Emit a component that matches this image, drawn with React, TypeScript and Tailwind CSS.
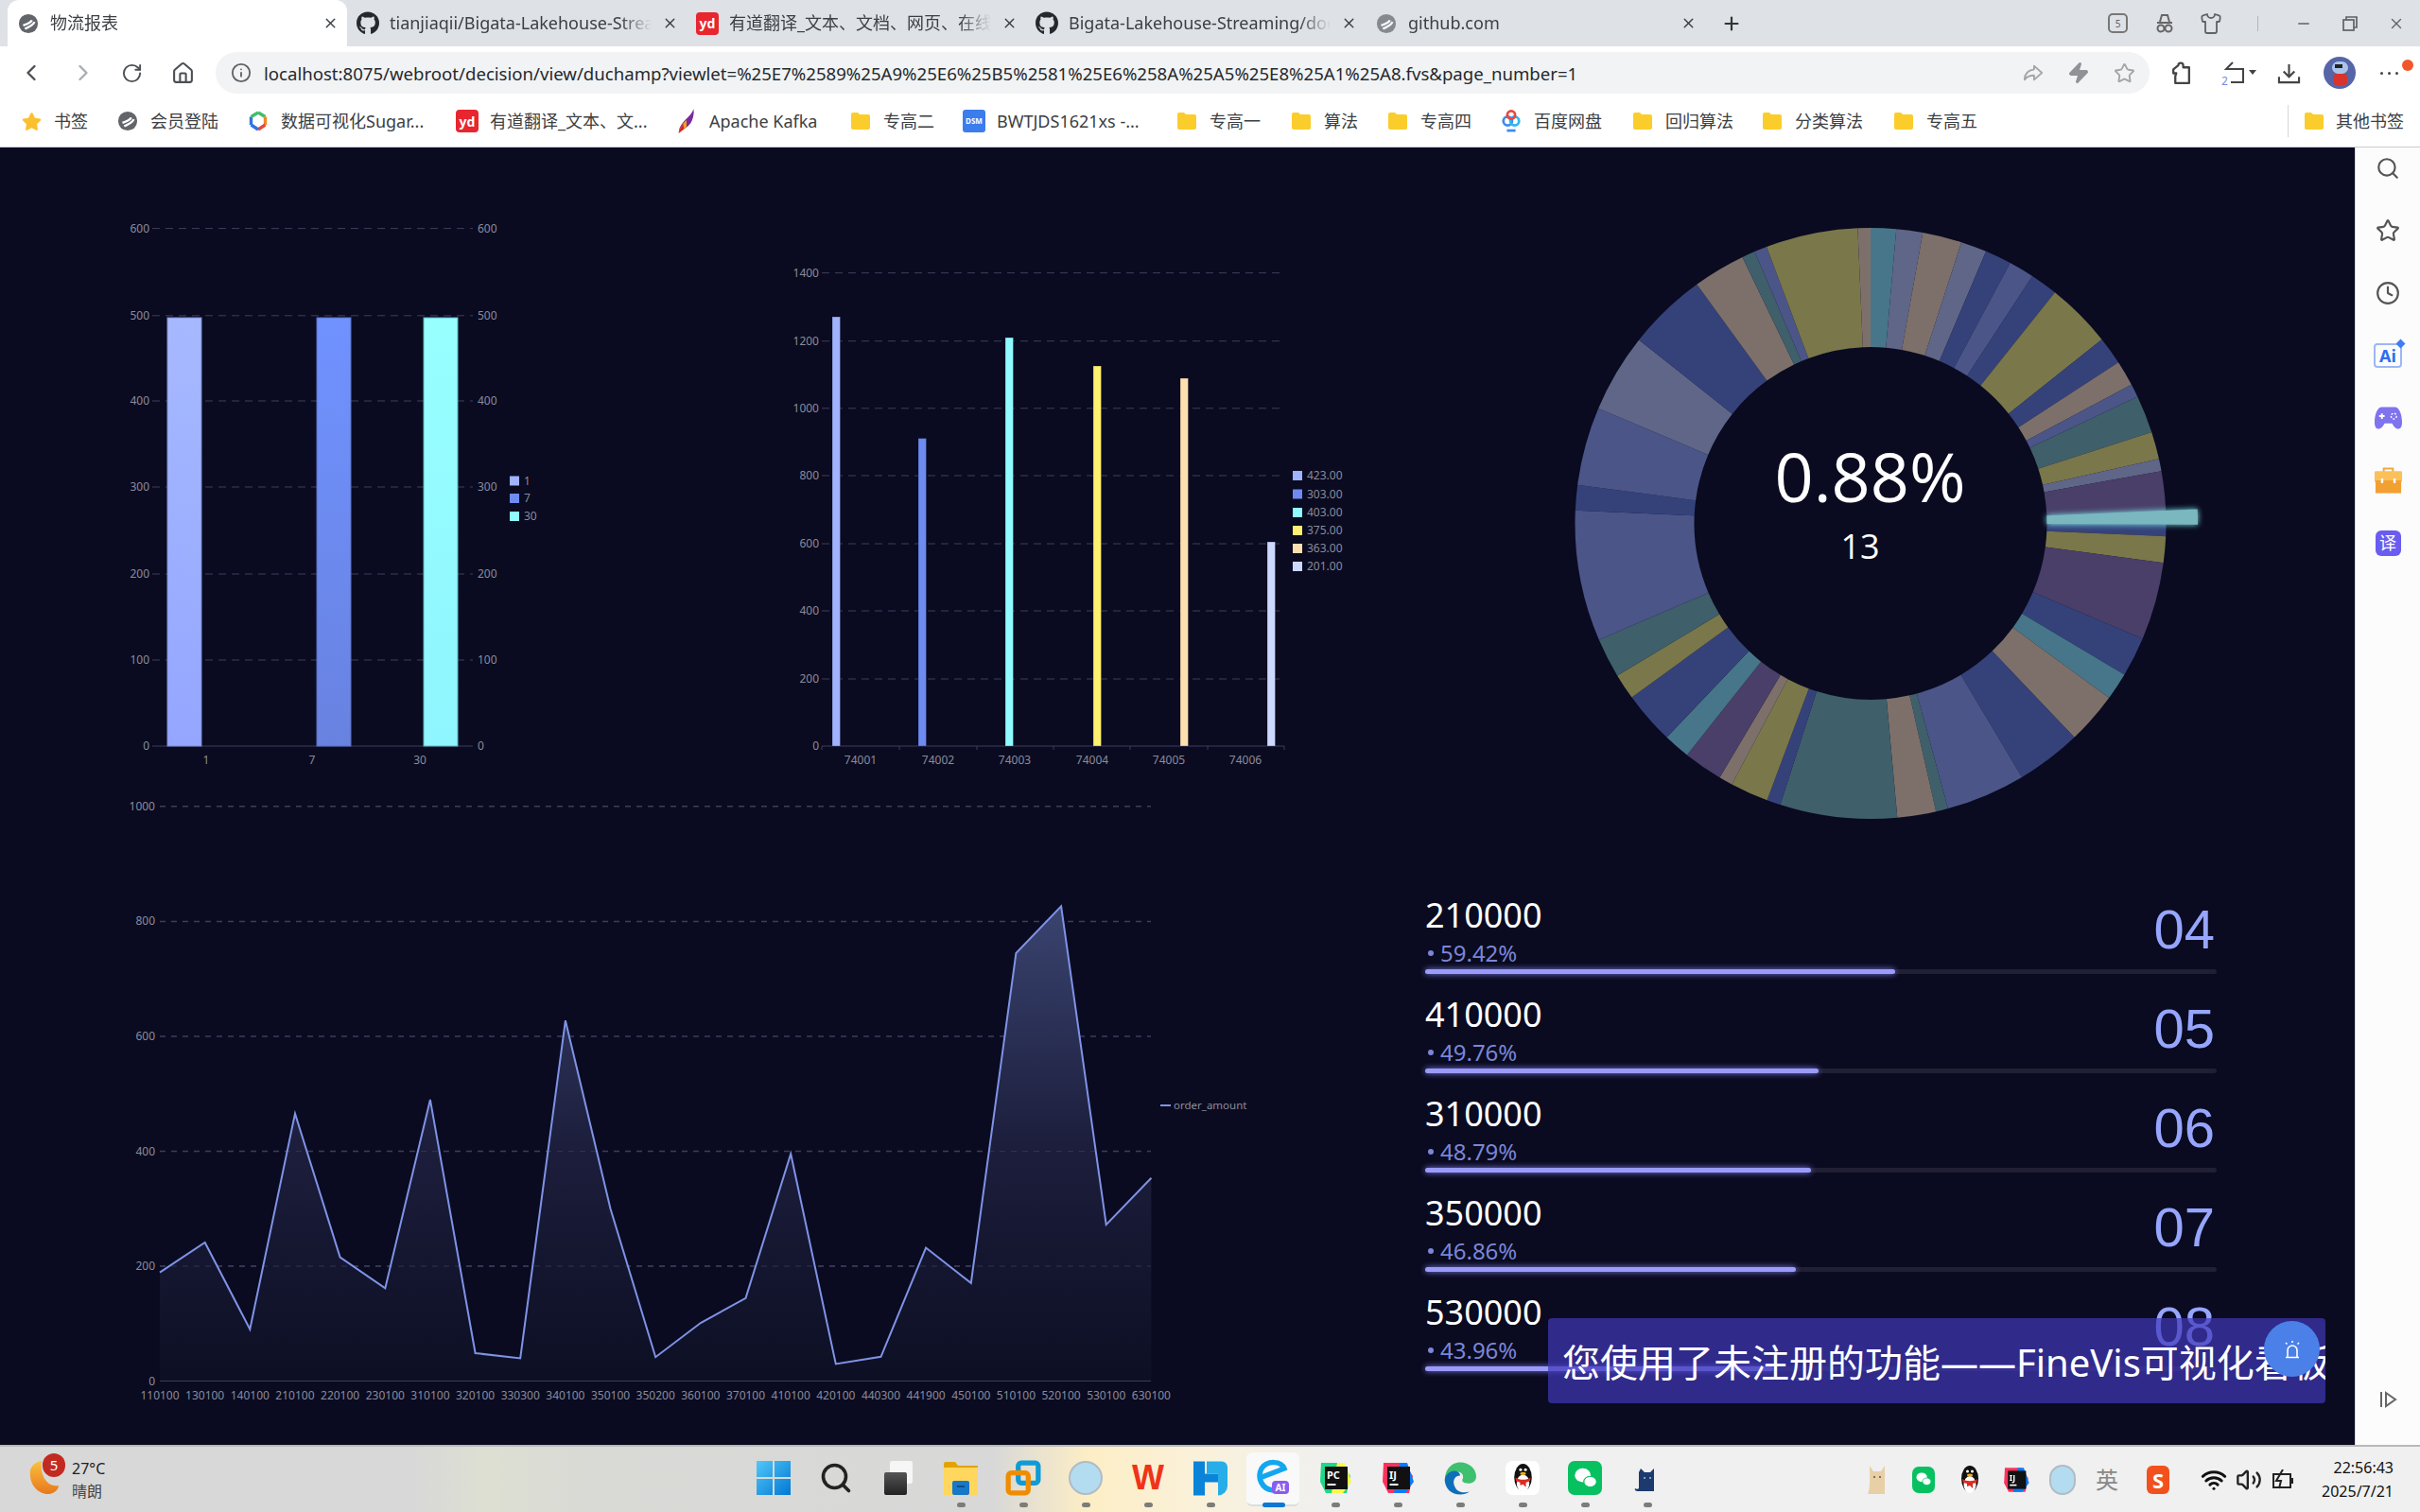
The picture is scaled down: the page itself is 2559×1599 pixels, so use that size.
import { FaGithub, FaStar } from "react-icons/fa";
import {
  ChevronLeft,
  ChevronRight,
  Clock,
  Home,
  Info,
  Minus,
  Plus,
  RotateCw,
  Search,
  Shirt,
  Star,
  Volume2,
  Wifi,
  X,
  Zap,
} from "lucide-react";
import type { ReactNode } from "react";

const cjk = "[font-family:'Noto_Sans','Noto_Sans_CJK_SC',sans-serif]";

/* ---------- small logos ---------- */

function FineLogo({ className = "" }: { className?: string }) {
  return (
    <svg viewBox="0 0 24 24" className={`h-[22px] w-[22px] ${className}`}>
      <circle cx="12" cy="12" r="11" fill="#62666b" />
      <path d="M6 14c3-1 9-3 10-6M8 18c3-2 9-3 11-8" stroke="#fff" strokeWidth="2.6" fill="none" />
    </svg>
  );
}

function YdLogo() {
  return (
    <div className="flex h-[24px] w-[24px] items-center justify-center rounded-[4px] bg-[#e8262f] text-[14px] font-bold text-white">
      yd
    </div>
  );
}

function FolderIcon() {
  return (
    <svg viewBox="0 0 20 18" className="h-[18px] w-[20px]">
      <path d="M0 2a2 2 0 0 1 2-2h5l2 2h9a2 2 0 0 1 2 2v12a2 2 0 0 1-2 2H2a2 2 0 0 1-2-2z" fill="#fbcd2c" />
    </svg>
  );
}

function SugarLogo() {
  return (
    <svg viewBox="0 0 24 24" className="h-[24px] w-[24px]" fill="none" strokeWidth="3.4">
      <path d="M12 3l7.5 4.5" stroke="#3fbf6b" />
      <path d="M19.5 7.5V16" stroke="#f08a24" />
      <path d="M19.5 16L12 21" stroke="#e34a3a" />
      <path d="M12 21l-7.5-5" stroke="#2f73e0" />
      <path d="M4.5 16V7.5" stroke="#2f73e0" />
      <path d="M4.5 7.5L12 3" stroke="#3fbf6b" />
    </svg>
  );
}

function KafkaLogo() {
  return (
    <svg viewBox="0 0 24 28" className="h-[28px] w-[22px]">
      <path d="M20 0C18 8 8 12 4 22c-1 3-1 5-1 6 5-5 12-7 15-14 2-5 3-10 2-14z" fill="#7b2a9c" />
      <path d="M12 13C8 16 4 22 3 28c4-3 7-5 9-8z" fill="#f2a01e" />
      <path d="M8 17c-2 3-4 7-5 11 2-2 4-3 6-5z" fill="#d3232b" />
    </svg>
  );
}

function BaiduLogo() {
  return (
    <svg viewBox="0 0 24 28" className="h-[26px] w-[22px]" fill="none" strokeWidth="3">
      <circle cx="8" cy="14" r="5" stroke="#3f8bf0" />
      <circle cx="16" cy="14" r="5" stroke="#31b6f0" />
      <circle cx="12" cy="7" r="4.5" stroke="#e8483f" />
      <path d="M7 25h10" stroke="#3f8bf0" />
    </svg>
  );
}

/* ---------- browser chrome ---------- */

const tabs = [
  { title: "物流报表", icon: <FineLogo />, active: true },
  { title: "tianjiaqii/Bigata-Lakehouse-Streaming", icon: <FaGithub className="h-[25px] w-[25px] text-[#24292f]" /> },
  { title: "有道翻译_文本、文档、网页、在线翻译", icon: <YdLogo /> },
  { title: "Bigata-Lakehouse-Streaming/doc", icon: <FaGithub className="h-[25px] w-[25px] text-[#24292f]" /> },
  { title: "github.com", icon: <FineLogo className="opacity-70" /> },
];

function TabBar() {
  return (
    <div className="flex h-[49px] items-center bg-[#dee1e6] pl-[8px]">
      {tabs.map((tab) => (
        <div
          key={tab.title}
          className={`flex h-full w-[359px] shrink-0 items-center gap-[11px] pl-[10px] pr-[9px] ${
            tab.active ? "rounded-t-[12px] bg-white" : ""
          }`}
        >
          <div className="flex w-[24px] shrink-0 justify-center">{tab.icon}</div>
          <div className="min-w-0 flex-1 overflow-hidden whitespace-nowrap text-[18px] text-[#3c4043] [mask-image:linear-gradient(to_right,black_88%,transparent)]">
            {tab.title}
          </div>
          <X className="h-[17px] w-[17px] shrink-0 text-[#3c4043]" strokeWidth={2} />
        </div>
      ))}
      <Plus className="ml-[17px] h-[22px] w-[22px] text-[#333]" strokeWidth={2.4} />
      <div className="ml-auto flex items-center text-[#5f6368]">
        <div className="flex h-[21px] w-[21px] items-center justify-center rounded-[5px] border-2 border-[#777] text-[10px] leading-none">5</div>
        <svg viewBox="0 0 24 24" className="ml-[27px] h-[24px] w-[24px]" fill="none" stroke="#666" strokeWidth="2">
          <path d="M7 10l2-7h6l2 7M4 11h16" />
          <circle cx="8" cy="17" r="3.5" />
          <circle cx="16" cy="17" r="3.5" />
        </svg>
        <Shirt className="ml-[25px] h-[24px] w-[24px]" strokeWidth={1.8} />
        <div className="ml-[37px] h-[16px] w-px bg-[#b5b5b5]" />
        <Minus className="ml-[39px] h-[18px] w-[18px]" strokeWidth={1.8} />
        <svg viewBox="0 0 18 18" className="ml-[31px] h-[18px] w-[18px]" fill="none" stroke="#5f6368" strokeWidth="1.7">
          <rect x="2" y="5" width="11" height="11" />
          <path d="M5 5V2h11v11h-3" />
        </svg>
        <X className="ml-[31px] mr-[16px] h-[18px] w-[18px]" strokeWidth={1.8} />
      </div>
    </div>
  );
}

function Toolbar() {
  return (
    <div className="flex h-[56px] items-center bg-white text-[#4b4f54]">
      <div className="flex w-[228px] shrink-0 items-center">
        <ChevronLeft className="ml-[19px] h-[28px] w-[28px]" strokeWidth={2} />
        <ChevronRight className="ml-[27px] h-[28px] w-[28px] text-[#a9acb0]" strokeWidth={2} />
        <RotateCw className="ml-[26px] h-[23px] w-[23px]" strokeWidth={2} />
        <Home className="ml-[30px] h-[25px] w-[25px]" strokeWidth={2} />
      </div>
      <div className="flex h-[44px] w-[2045px] shrink-0 items-center rounded-full bg-[#f1f3f4] pl-[16px]">
        <Info className="h-[22px] w-[22px] text-[#5f6368]" strokeWidth={2} />
        <div className="ml-[13px] w-[1394px] whitespace-nowrap pt-[2px] text-[18.6px] text-[#26292d]">
          localhost:8075/webroot/decision/view/duchamp?viewlet=%25E7%2589%25A9%25E6%25B5%2581%25E6%258A%25A5%25E8%25A1%25A8.fvs&amp;page_number=1
        </div>
        <svg viewBox="0 0 24 24" className="ml-[466px] h-[22px] w-[22px]" fill="none" stroke="#a3a6a9" strokeWidth="2" strokeLinejoin="round">
          <path d="M13 4l9 8-9 8v-5c-5 0-8 1-11 5 0-7 4-11 11-12z" />
        </svg>
        <Zap className="ml-[25px] h-[24px] w-[24px] fill-[#8f9296] text-[#8f9296]" />
        <Star className="ml-[25px] h-[23px] w-[23px] text-[#a3a6a9]" strokeWidth={2} />
      </div>
      <svg viewBox="0 0 24 24" className="ml-[21px] h-[25px] w-[25px]" fill="none" stroke="#444" strokeWidth="2.2" strokeLinejoin="round">
        <path d="M6 22h14V6h-6V4a2.5 2.5 0 0 0-5 0L4 8v4h3l-1 3z" />
      </svg>
      <svg viewBox="0 0 40 28" className="ml-[28px] h-[28px] w-[40px]" fill="none">
        <path d="M14 3L7 10h18v14H12" stroke="#444" strokeWidth="2" />
        <text x="2" y="27" fill="#7d86e8" fontSize="12">2</text>
        <path d="M31 11h8l-4 5z" fill="#444" />
      </svg>
      <svg viewBox="0 0 26 26" className="ml-[21px] h-[25px] w-[25px]" fill="none" stroke="#444" strokeWidth="2.2">
        <path d="M13 3v14M7 11l6 6 6-6M2 17v6h22v-6" />
      </svg>
      <div className="relative ml-[24px] h-[34px] w-[34px] overflow-hidden rounded-full bg-[#5665a8]">
        <div className="absolute left-[10px] top-[18px] h-[12px] w-[15px] rounded-[4px] bg-[#d8342c]" />
        <div className="absolute left-[9px] top-[5px] h-[13px] w-[17px] rounded-full bg-[#a9c4e8]" />
        <div className="absolute left-[12px] top-[8px] h-[4px] w-[8px] bg-[#222]" />
      </div>
      <div className="ml-[26px] flex gap-[5px]">
        <div className="h-[3px] w-[3px] rounded-full bg-[#444]" />
        <div className="h-[3px] w-[3px] rounded-full bg-[#444]" />
        <div className="h-[3px] w-[3px] rounded-full bg-[#444]" />
      </div>
      <div className="absolute left-[2540px] top-[63px] h-[12px] w-[12px] rounded-full bg-[#f2552c]" />
    </div>
  );
}

const bookmarks: { label: string; icon: ReactNode; width: string }[] = [
  { label: "书签", icon: <FaStar className="h-[21px] w-[21px] text-[#fbc02d]" />, width: "w-[102px]" },
  { label: "会员登陆", icon: <FineLogo />, width: "w-[138px]" },
  { label: "数据可视化Sugar...", icon: <SugarLogo />, width: "w-[221px]" },
  { label: "有道翻译_文本、文...", icon: <YdLogo />, width: "w-[232px]" },
  { label: "Apache Kafka", icon: <KafkaLogo />, width: "w-[184px]" },
  { label: "专高二", icon: <FolderIcon />, width: "w-[120px]" },
  { label: "BWTJDS1621xs -...", icon: <div className="flex h-[24px] w-[24px] items-center justify-center rounded-[3px] bg-[#3b7ded] text-[8px] font-bold text-white">DSM</div>, width: "w-[225px]" },
  { label: "专高一", icon: <FolderIcon />, width: "w-[121px]" },
  { label: "算法", icon: <FolderIcon />, width: "w-[102px]" },
  { label: "专高四", icon: <FolderIcon />, width: "w-[120px]" },
  { label: "百度网盘", icon: <BaiduLogo />, width: "w-[139px]" },
  { label: "回归算法", icon: <FolderIcon />, width: "w-[137px]" },
  { label: "分类算法", icon: <FolderIcon />, width: "w-[139px]" },
  { label: "专高五", icon: <FolderIcon />, width: "w-[418px]" },
];

function BookmarkBar() {
  return (
    <div className="flex h-[51px] items-center border-b border-[#c9ccd0] bg-white pb-[4px] pl-[21px] text-[18px] text-[#3c4043]">
      {bookmarks.map((b) => (
        <div key={b.label} className={`flex shrink-0 items-center gap-[12px] ${b.width}`}>
          <div className="flex w-[24px] shrink-0 justify-center">{b.icon}</div>
          <span className="whitespace-nowrap">{b.label}</span>
        </div>
      ))}
      <div className="h-[34px] w-px bg-[#d5d7da]" />
      <div className="ml-[17px] flex items-center gap-[13px]">
        <FolderIcon />
        <span>其他书签</span>
      </div>
    </div>
  );
}

function SideRail() {
  return (
    <div className="flex w-[69px] shrink-0 flex-col items-center gap-[40px] border-l border-[#d8d9dd] bg-[#fcfcfc] pt-[9px]">
      <div className="flex h-[26px] items-center"><Search className="h-[26px] w-[26px] text-[#555]" strokeWidth={2} /></div>
      <div className="flex h-[26px] items-center"><Star className="h-[26px] w-[26px] text-[#555]" strokeWidth={2} /></div>
      <div className="flex h-[26px] items-center"><Clock className="h-[26px] w-[26px] text-[#555]" strokeWidth={2} /></div>
      <div className="flex h-[26px] items-center">
        <div className="relative flex h-[26px] w-[30px] items-center justify-center rounded-[4px] border-2 border-[#9db7f5] text-[18px] font-bold leading-none text-[#2f6df0]">
          Ai
          <div className="absolute -right-[4px] -top-[5px] h-[7px] w-[7px] rotate-45 bg-[#3f7bf5]" />
        </div>
      </div>
      <div className="flex h-[26px] items-center">
        <svg viewBox="0 0 32 26" className="h-[26px] w-[31px]">
          <path d="M9 1h14c5 0 8 8 8 17 0 9-6 8-9 4l-2-3h-8l-2 3c-3 4-9 5-9-4C1 9 4 1 9 1z" fill="#7f73ee" />
          <path d="M9 8v6M6 11h6" stroke="#fff" strokeWidth="2" />
          <circle cx="22" cy="11" r="3" fill="none" stroke="#fff" strokeWidth="1.4" strokeDasharray="2 1.6" />
        </svg>
      </div>
      <div className="flex h-[26px] items-center">
        <svg viewBox="0 0 32 30" className="h-[30px] w-[31px]">
          <path d="M11 6V2h10v4" fill="none" stroke="#f0a93c" strokeWidth="2" />
          <rect x="1" y="5" width="30" height="12" rx="1.5" fill="#fbc05a" />
          <rect x="2" y="15" width="28" height="14" fill="#f3a032" />
          <rect x="8" y="13" width="2.5" height="5" fill="#fff" />
          <rect x="21.5" y="13" width="2.5" height="5" fill="#fff" />
        </svg>
      </div>
      <div className="flex h-[26px] items-center">
        <div className={`flex h-[27px] w-[27px] items-center justify-center rounded-[6px] bg-[#6a5cf0] text-[18px] leading-none text-white ${cjk}`}>译</div>
      </div>
      <svg viewBox="0 0 20 18" className="mb-[39px] mt-auto h-[18px] w-[20px]" fill="none" stroke="#666" strokeWidth="2">
        <path d="M3 1v16M8 2l10 7-10 7z" />
      </svg>
    </div>
  );
}

/* ---------- charts, drawn in page coordinates through viewBox ---------- */

const axisText = "fill-[#8a8b9e] text-[12px]";
const gridStroke = "#3c3e5e";

function BarChartDays() {
  const grid = [
    ["600", 241.6],
    ["500", 333.8],
    ["400", 424],
    ["300", 515],
    ["200", 607],
    ["100", 698],
  ] as const;
  const bars = [
    { x: 177, w: 36, fill: "url(#barA)", stroke: "#7d8ad0" },
    { x: 335, w: 36, fill: "url(#barB)", stroke: "#5a6fc0" },
    { x: 448, w: 36, fill: "url(#barC)", stroke: "#5bb2bb" },
  ];
  const legend = [
    ["1", 508.5, "#a0b3ff"],
    ["7", 527, "#6d8bf0"],
    ["30", 546, "#8ffbff"],
  ] as const;
  return (
    <svg viewBox="0 156 760 674" className="h-full w-[760px] shrink-0">
      <defs>
        <linearGradient id="barA" x1="0" y1="0" x2="0" y2="1">
          <stop offset="0" stopColor="#a6b9ff" />
          <stop offset="1" stopColor="#94a6ff" />
        </linearGradient>
        <linearGradient id="barB" x1="0" y1="0" x2="0" y2="1">
          <stop offset="0" stopColor="#7092ff" />
          <stop offset="1" stopColor="#6882e0" />
        </linearGradient>
        <linearGradient id="barC" x1="0" y1="0" x2="0" y2="1">
          <stop offset="0" stopColor="#98ffff" />
          <stop offset="1" stopColor="#8ff5ff" />
        </linearGradient>
      </defs>
      {grid.map(([label, y]) => (
        <g key={label}>
          <line x1="161" x2="500" y1={y} y2={y} stroke={gridStroke} strokeDasharray="8 6" />
          <text x="158" y={y + 4} textAnchor="end" className={axisText}>{label}</text>
          <text x="505" y={y + 4} className={axisText}>{label}</text>
        </g>
      ))}
      <line x1="161" x2="500" y1="789" y2="789" stroke="#3a3c60" />
      <text x="158" y="793" textAnchor="end" className={axisText}>0</text>
      <text x="505" y="793" className={axisText}>0</text>
      {bars.map((b) => (
        <rect key={b.x} x={b.x} y="336" width={b.w} height="453" fill={b.fill} stroke={b.stroke} />
      ))}
      {[["1", 218], ["7", 330], ["30", 444]].map(([label, x]) => (
        <text key={label} x={x} y="808" textAnchor="middle" className={axisText}>{label}</text>
      ))}
      {legend.map(([label, y, color]) => (
        <g key={label}>
          <rect x="539" y={y - 5} width="10" height="10" fill={color} />
          <text x="554" y={y + 4} className={axisText}>{label}</text>
        </g>
      ))}
    </svg>
  );
}

function BarChartWarehouses() {
  const grid = [
    ["1400", 288.6],
    ["1200", 360.7],
    ["1000", 431.8],
    ["800", 503],
    ["600", 575],
    ["400", 646],
    ["200", 718],
  ] as const;
  const bars = [
    [880, 335, "#a0b3ff", "74001", 910],
    [971, 463.6, "#6d8bf0", "74002", 992],
    [1063, 357, "#8ffbff", "74003", 1073],
    [1156, 387, "#fff070", "74004", 1155],
    [1248, 400, "#ffdfb0", "74005", 1236],
    [1340, 573, "#cdd8ff", "74006", 1317],
  ] as const;
  const legend = [
    ["423.00", 503, "#a0b3ff"],
    ["303.00", 522.5, "#6d8bf0"],
    ["403.00", 542, "#8ffbff"],
    ["375.00", 561, "#fff070"],
    ["363.00", 580, "#ffdfb0"],
    ["201.00", 599, "#cdd8ff"],
  ] as const;
  return (
    <svg viewBox="760 156 780 674" className="h-full w-[780px] shrink-0">
      {grid.map(([label, y]) => (
        <g key={label}>
          <line x1="869" x2="1357" y1={y} y2={y} stroke={gridStroke} strokeDasharray="8 6" />
          <text x="866" y={y + 4} textAnchor="end" className={axisText}>{label}</text>
        </g>
      ))}
      <line x1="869" x2="1358" y1="789" y2="789" stroke="#3a3c60" />
      <text x="866" y="793" textAnchor="end" className={axisText}>0</text>
      {[869, 951, 1033, 1114, 1195, 1277, 1358].map((x) => (
        <line key={x} x1={x} x2={x} y1="789" y2="793" stroke="#3a3c60" />
      ))}
      {bars.map(([x, top, color, label, labelX]) => (
        <g key={label}>
          <rect x={x} y={top} width="8.5" height={789 - top} fill={color} stroke="#0a0b20" strokeOpacity="0.3" />
          <text x={labelX} y="808" textAnchor="middle" className={axisText}>{label}</text>
        </g>
      ))}
      {legend.map(([label, y, color]) => (
        <g key={label}>
          <rect x="1367" y={y - 5} width="10" height="10" fill={color} />
          <text x="1382" y={y + 4} className={axisText}>{label}</text>
        </g>
      ))}
    </svg>
  );
}

const navy = "#35427a";
const blue = "#4b5588";
const gray = "#5f6688";
const brown = "#7d706a";
const olive = "#7a774b";
const teal = "#47768a";
const dteal = "#3f5f6b";
const purple = "#4a3f68";

// end angle of each slice, clockwise from twelve o'clock
const slices: [number, string][] = [
  [5, teal], [10.2, gray], [17.9, brown], [23, gray], [28.2, navy], [33.2, blue], [38.6, navy],
  [51.5, olive], [57, navy], [62, brown], [64.6, blue], [72, dteal], [77.4, olive], [79.8, gray],
  [87.5, purple], [90.2, "#35427a"], [92.5, navy], [97.7, olive], [113, purple], [120.8, navy],
  [126.2, teal], [136.4, brown], [149.2, navy], [164.8, blue], [167.2, dteal], [174.8, brown],
  [197.8, dteal], [200.5, navy], [208, olive], [210.7, brown], [218.4, purple], [223.6, teal],
  [233.9, navy], [239, olive], [246.8, dteal], [272.5, blue], [277.5, navy], [292.9, blue],
  [308.4, gray], [324, navy], [334.3, brown], [336.9, dteal], [339.4, blue], [357.5, olive], [360, brown],
];

function slicePath(cx: number, cy: number, r0: number, r1: number, a0: number, a1: number) {
  const pt = (r: number, a: number) => {
    const t = (a * Math.PI) / 180;
    return `${(cx + r * Math.sin(t)).toFixed(2)} ${(cy - r * Math.cos(t)).toFixed(2)}`;
  };
  const large = a1 - a0 > 180 ? 1 : 0;
  return `M${pt(r0, a0)} L${pt(r1, a0)} A${r1} ${r1} 0 ${large} 1 ${pt(r1, a1)} L${pt(r0, a1)} A${r0} ${r0} 0 ${large} 0 ${pt(r0, a0)} Z`;
}

function Donut() {
  const cx = 1978;
  const cy = 553.5;
  return (
    <svg viewBox="1540 156 950 674" className="h-full w-[950px] shrink-0 overflow-visible">
      {slices.map(([end, color], i) => (
        <path key={end} d={slicePath(cx, cy, 186.5, 312.5, i === 0 ? 0 : slices[i - 1][0], end)} fill={color} />
      ))}
      <path
        d={slicePath(cx, cy, 186.5, 346, 87.5, 90.2)}
        fill="#7ab7bf"
        className="drop-shadow-[0_0_3px_#7fe8ef]"
      />
      <text x="1977.5" y="531" textAnchor="middle" className="fill-white text-[72px] [font-family:'Open_Sans',sans-serif]">0.88%</text>
      <text x="1967" y="591" textAnchor="middle" className="fill-white text-[36px] [font-family:'Open_Sans',sans-serif]">13</text>
    </svg>
  );
}

const lineValues = [1225, 1150, 1368, 826, 1187, 1265, 791, 1428, 1441, 592, 1065, 1438, 1352, 1290, 927, 1455, 1437, 1163, 1252, 423, 305, 1105, 988];
const lineLabels = [
  "110100", "130100", "140100", "210100", "220100", "230100", "310100", "320100", "330300", "340100", "350100", "350200",
  "360100", "370100", "410100", "420100", "440300", "441900", "450100", "510100", "520100", "530100", "630100",
];

function LineChart() {
  const x0 = 169;
  const step = 1048.4 / 22;
  const pts = lineValues.map((v, i) => `${(x0 + i * step).toFixed(1)},${(830 + v / 2.376).toFixed(1)}`);
  const grid = [
    ["1000", 852.7],
    ["800", 974.4],
    ["600", 1096],
    ["400", 1217.6],
    ["200", 1339],
  ] as const;
  return (
    <svg viewBox="0 830 1400 698" className="h-full w-[1400px] shrink-0">
      <defs>
        <linearGradient id="lineFill" gradientUnits="userSpaceOnUse" x1="0" y1="958" x2="0" y2="1460">
          <stop offset="0" stopColor="#3a4470" />
          <stop offset="0.5" stopColor="#1c1e3c" />
          <stop offset="1" stopColor="#0d0f24" />
        </linearGradient>
      </defs>
      {grid.map(([label, y]) => (
        <g key={label}>
          <line x1="169" x2="1217" y1={y} y2={y} stroke={gridStroke} strokeDasharray="6 6" strokeWidth="1.5" />
          <text x="164" y={y + 4} textAnchor="end" className={axisText}>{label}</text>
        </g>
      ))}
      <polygon points={`${x0},1460.5 ${pts.join(" ")} ${x0 + 22 * step},1460.5`} fill="url(#lineFill)" />
      {grid.slice(3).map(([label, y]) => (
        <line key={label} x1="169" x2="1217" y1={y} y2={y} stroke={gridStroke} strokeDasharray="6 6" strokeOpacity="0.7" />
      ))}
      <polyline points={pts.join(" ")} fill="none" stroke="#7f93e6" strokeWidth="2" />
      <line x1="169" x2="1217" y1="1460.5" y2="1460.5" stroke="#3a3c60" />
      <text x="164" y="1465" textAnchor="end" className={axisText}>0</text>
      {lineLabels.map((label, i) => (
        <text key={label} x={x0 + i * step} y="1480" textAnchor="middle" className={axisText}>{label}</text>
      ))}
      <line x1="1227" x2="1238" y1="1169" y2="1169" stroke="#7f93e6" strokeWidth="2" />
      <text x="1241" y="1173" className="fill-[#8a8b9e] text-[11.5px]">order_amount</text>
    </svg>
  );
}

const ranks = [
  { code: "210000", pct: "59.42%", fill: "w-[59.42%]", rank: "04" },
  { code: "410000", pct: "49.76%", fill: "w-[49.76%]", rank: "05" },
  { code: "310000", pct: "48.79%", fill: "w-[48.79%]", rank: "06" },
  { code: "350000", pct: "46.86%", fill: "w-[46.86%]", rank: "07" },
  { code: "530000", pct: "43.96%", fill: "w-[43.96%]", rank: "08" },
];

function RankList() {
  return (
    <div className="flex w-[1090px] flex-col pl-[107px] pr-[146px] pt-[115px]">
      {ranks.map((r) => (
        <div key={r.code} className="h-[105px] shrink-0">
          <div className="flex h-[79.5px] justify-between">
            <div className="[font-family:'Noto_Sans',sans-serif]">
              <div className="h-[46px] text-[36px] leading-[46px] text-white">{r.code}</div>
              <div className="flex h-[33.5px] items-center pl-[3px] text-[24px] text-[#7b86d8]">
                <div className="mr-[7px] h-[6px] w-[6px] rounded-full bg-[#7b86d8]" />
                {r.pct}
              </div>
            </div>
            <div className="pr-[2px] pt-[9px] text-[58px] leading-[58px] text-[#96a6ff] [font-family:'Liberation_Sans',sans-serif]">{r.rank}</div>
          </div>
          <div className="h-[5px] rounded-full bg-[#201f33]">
            <div className={`h-full rounded-full bg-[#9a9bfa] shadow-[0_0_6px_#7f7fe8] ${r.fill}`} />
          </div>
        </div>
      ))}
    </div>
  );
}

function Watermark() {
  return (
    <div className="absolute left-[1637px] top-[1238px] flex h-[90px] w-[822px] items-center overflow-hidden rounded-[4px] bg-[#4037b9]/70 pl-[15px]">
      <span className={`whitespace-nowrap pt-[4px] text-[40px] leading-none text-white ${cjk}`}>
        您使用了未注册的功能——FineVis可视化看板
      </span>
      <div className="absolute left-[757px] top-[3px] flex h-[59px] w-[59px] items-center justify-center rounded-full bg-[#4a80e8]">
        <svg viewBox="0 0 24 24" className="h-[24px] w-[24px]" fill="none" stroke="#fff" strokeWidth="1.6">
          <path d="M7 20V13a5 5 0 0 1 10 0v7M5 20.5h14M12 3v2M5 5l1.5 1.5M19 5l-1.5 1.5" />
        </svg>
      </div>
    </div>
  );
}

/* ---------- taskbar ---------- */

function AppIcon({ children, active, dot = true }: { children: ReactNode; active?: boolean; dot?: boolean }) {
  return (
    <div className="relative flex h-[69px] w-[66px] shrink-0 items-center justify-center">
      {active && <div className="absolute left-[5px] top-[6px] h-[57px] w-[56px] rounded-[6px] border-b-2 border-[#dddddd] bg-[#f9f9f9]" />}
      <div className="relative pb-[3px]">{children}</div>
      {dot && !active && <div className="absolute bottom-[5px] left-[29px] h-[5px] w-[9px] rounded-full bg-[#7c7c78]" />}
      {active && <div className="absolute bottom-[5px] left-[22px] h-[5px] w-[24px] rounded-full bg-[#0a78d4]" />}
    </div>
  );
}

function JetBrains({ label, from, to }: { label: string; from: string; to: string }) {
  return (
    <svg viewBox="0 0 36 36" className="h-[36px] w-[36px]">
      <path d="M3 2h22l9 14-4 18H8L2 22z" fill={from} />
      <path d="M20 2h8l7 20-9 12H14z" fill={to} />
      <rect x="7" y="6" width="24" height="24" fill="#111" />
      <text x="9" y="19" fill="#fff" fontSize="11" fontWeight="700">{label}</text>
      <rect x="9.5" y="24" width="9" height="2" fill="#fff" />
    </svg>
  );
}

function WeChatBubble({ size }: { size: string }) {
  return (
    <div className={`flex items-center justify-center rounded-[7px] bg-[#07c160] ${size}`}>
      <svg viewBox="0 0 24 24" className="h-[75%] w-[75%]" fill="#fff">
        <ellipse cx="9.5" cy="9" rx="7.5" ry="6.5" />
        <ellipse cx="16.5" cy="15" rx="6" ry="5" stroke="#07c160" strokeWidth="1" />
      </svg>
    </div>
  );
}

function Penguin({ size }: { size: string }) {
  return (
    <svg viewBox="0 0 24 32" className={size}>
      <ellipse cx="12" cy="15" rx="9" ry="14" fill="#111" />
      <ellipse cx="12" cy="21" rx="6.5" ry="9" fill="#fff" />
      <path d="M4 15c5 3 11 3 16 0l-1 4-4 1v5l-3-3-3 1v-3l-4-1z" fill="#e02a20" />
      <ellipse cx="12" cy="11" rx="3" ry="1.6" fill="#f2b01e" />
      <circle cx="9.5" cy="7" r="1.5" fill="#fff" />
      <circle cx="14.5" cy="7" r="1.5" fill="#fff" />
    </svg>
  );
}

function Taskbar() {
  return (
    <div className="flex h-[71px] items-center border-t-2 border-[#b9b9b9] bg-[linear-gradient(90deg,#d8d8d8_0%,#d8d8d8_17%,#dddfd2_20%,#d9d9d6_25%,#d8d8d8_41%,#fdeec5_45%,#f9f1dc_50%,#f0f0f0_55%,#f0f0f0_100%)]">
      <div className="relative w-[785px] shrink-0 pl-[76px] text-[16px] leading-[24px] text-[#222]">
        <svg viewBox="0 0 32 38" className="absolute left-[30px] top-[2px] h-[38px] w-[32px]">
          <defs>
            <linearGradient id="moon" x1="0" y1="0" x2="0" y2="1">
              <stop offset="0" stopColor="#f9c23c" />
              <stop offset="1" stopColor="#e8771d" />
            </linearGradient>
          </defs>
          <path d="M2 12C0 28 12 38 22 37c6-1 10-5 10-9-12 2-20-10-18-26C8 3 3 7 2 12z" fill="url(#moon)" />
        </svg>
        <div className="absolute left-[45px] top-[-4px] flex h-[25px] w-[24px] items-center justify-center rounded-full bg-[#c22a20] text-[15px] text-white">5</div>
        <div className={`${cjk}`}>27°C</div>
        <div className={`text-[#444] ${cjk}`}>晴朗</div>
      </div>
      <AppIcon dot={false}>
        <svg viewBox="0 0 36 36" className="h-[36px] w-[36px]">
          <defs>
            <linearGradient id="win" x1="0" y1="0" x2="1" y2="1">
              <stop offset="0" stopColor="#52c7f8" />
              <stop offset="1" stopColor="#0078d4" />
            </linearGradient>
          </defs>
          <path d="M0 0h17v17H0zM19 0h17v17H19zM0 19h17v17H0zM19 19h17v17H19z" fill="url(#win)" />
        </svg>
      </AppIcon>
      <AppIcon dot={false}><Search className="h-[36px] w-[36px] text-[#222]" strokeWidth={2.4} /></AppIcon>
      <AppIcon dot={false}>
        <div className="relative h-[36px] w-[36px]">
          <div className="absolute right-[3px] top-0 h-[24px] w-[24px] rounded-[2px] bg-[#f6f6f6]" />
          <div className="absolute bottom-0 left-[3px] h-[24px] w-[24px] rounded-[2px] bg-[linear-gradient(180deg,#555,#222)]" />
        </div>
      </AppIcon>
      <AppIcon>
        <svg viewBox="0 0 36 36" className="h-[36px] w-[36px]">
          <path d="M0 3a2 2 0 0 1 2-2h10l3 4h21v31H0z" fill="#e2a300" />
          <rect y="7" width="36" height="29" fill="#ffd75e" />
          <rect x="9" y="21" width="18" height="15" rx="2" fill="#1777c8" />
          <rect x="14" y="26" width="8" height="2" fill="#0b4d8a" />
        </svg>
      </AppIcon>
      <AppIcon>
        <svg viewBox="0 0 36 36" className="h-[38px] w-[38px]" fill="none" strokeWidth="5">
          <rect x="13" y="3" width="20" height="20" rx="3" stroke="#0e9bd8" />
          <rect x="3" y="13" width="20" height="20" rx="3" stroke="#f08c00" />
        </svg>
      </AppIcon>
      <AppIcon>
        <div className="h-[36px] w-[36px] rounded-full border-2 border-[#b0bcc4] bg-[#b4dcf0]" />
      </AppIcon>
      <AppIcon>
        <div className="text-[36px] font-black leading-none text-[#f03318] [font-family:'Liberation_Sans',sans-serif]">W</div>
      </AppIcon>
      <AppIcon>
        <svg viewBox="0 0 36 36" className="h-[37px] w-[36px]">
          <path d="M0 0h12v36H0zM12 13h14v9H12z" fill="#0a84d8" />
          <path d="M14 0h16a6 6 0 0 1 6 6v20a10 10 0 0 1-10 10V13H14z" fill="#27aee8" />
        </svg>
      </AppIcon>
      <AppIcon active>
        <svg viewBox="0 0 36 40" className="h-[40px] w-[36px]">
          <path d="M4 20L30 10C27 2 12 1 6 10c-5 9 0 22 12 23" fill="none" stroke="#12a7ee" strokeWidth="5.5" />
          <rect x="17" y="23" width="18" height="14" rx="4" fill="#8a5cf0" />
          <text x="20.5" y="34" fill="#fff" fontSize="10" fontWeight="700">AI</text>
        </svg>
      </AppIcon>
      <AppIcon><JetBrains label="PC" from="#21d789" to="#fcf84a" /></AppIcon>
      <AppIcon><JetBrains label="IJ" from="#fe315d" to="#087cfa" /></AppIcon>
      <AppIcon>
        <svg viewBox="0 0 36 36" className="h-[37px] w-[36px]">
          <path d="M18 1c10 0 17 7 17 15 0 6-6 8-10 7-4 0-6-3-4-5 1-6-4-8-9-6C7 14 3 18 2 22 1 10 8 1 18 1z" fill="#3fc06f" />
          <path d="M2 22c-1-6 3-11 9-12 4 0 7 2 7 5-6 0-9 6-5 13 2 4 8 6 15 4-3 2-6 3-10 3C9 35 3 29 2 22z" fill="#0e6fb8" />
        </svg>
      </AppIcon>
      <AppIcon>
        <div className="flex h-[36px] w-[36px] items-center justify-center rounded-[7px] bg-white">
          <Penguin size="h-[33px] w-[25px]" />
        </div>
      </AppIcon>
      <AppIcon><WeChatBubble size="h-[36px] w-[36px]" /></AppIcon>
      <AppIcon>
        <svg viewBox="0 0 28 36" className="h-[36px] w-[28px]">
          <path d="M7 8l4 4h6l4-4v24H4c-2 0-4-1-3-3 1 1 3 1 4 0V12z" fill="#1d3a6e" />
          <circle cx="11" cy="18" r="1" fill="#9cc0f0" />
          <circle cx="17" cy="18" r="1" fill="#9cc0f0" />
        </svg>
      </AppIcon>
      <div className="ml-[185px] flex items-center">
        <div className="flex w-[49px] justify-center">
          <svg viewBox="0 0 24 36" className="h-[36px] w-[24px]">
            <path d="M4 3l4 6h8l4-6v30H2c3-6 2-18 2-30z" fill="#e8cfa5" />
            <circle cx="9" cy="15" r="1" fill="#555" />
            <circle cx="15" cy="15" r="1" fill="#555" />
          </svg>
        </div>
        <div className="flex w-[49px] justify-center"><WeChatBubble size="h-[28px] w-[24px]" /></div>
        <div className="flex w-[49px] justify-center"><Penguin size="h-[36px] w-[24px]" /></div>
        <div className="flex w-[49px] justify-center">
          <div className="h-[36px] w-[36px] origin-center scale-[0.8]"><JetBrains label="IJ" from="#fe315d" to="#087cfa" /></div>
        </div>
        <div className="flex w-[49px] justify-center">
          <div className="h-[32px] w-[28px] rounded-full border-2 border-[#b0bcc4] bg-[#b4dcf0]" />
        </div>
        <div className={`flex w-[46px] justify-center text-[24px] text-[#888] ${cjk}`}>英</div>
        <div className="flex w-[62px] justify-center">
          <div className="flex h-[30px] w-[24px] items-center justify-center rounded-[6px] bg-[#f2511e] text-[22px] font-bold leading-none text-white">S</div>
        </div>
        <Wifi className="ml-[14px] h-[28px] w-[28px] text-[#111]" strokeWidth={2.6} />
        <Volume2 className="ml-[9px] h-[28px] w-[28px] text-[#222]" strokeWidth={2} />
        <svg viewBox="0 0 26 22" className="ml-[8px] h-[22px] w-[26px]" fill="none" stroke="#222" strokeWidth="2">
          <path d="M4 5h18v14H4zM24 9v6" />
          <path d="M14 0L7 12h5l-2 8" />
        </svg>
      </div>
      <div className={`ml-auto mr-[28px] text-right text-[16px] leading-[25px] text-[#111] ${cjk}`}>
        <div>22:56:43</div>
        <div>2025/7/21</div>
      </div>
    </div>
  );
}

export default function App() {
  return (
    <div className={`relative flex h-[1599px] w-[2559px] flex-col overflow-hidden bg-white ${cjk}`}>
      <TabBar />
      <Toolbar />
      <BookmarkBar />
      <div className="flex h-[1372px] shrink-0">
        <div className="relative flex min-w-0 flex-1 flex-col bg-[#0a0b20]">
          <div className="flex h-[674px] shrink-0">
            <BarChartDays />
            <BarChartWarehouses />
            <Donut />
          </div>
          <div className="flex h-[698px] shrink-0">
            <LineChart />
            <RankList />
          </div>
          <Watermark />
        </div>
        <SideRail />
      </div>
      <Taskbar />
    </div>
  );
}
